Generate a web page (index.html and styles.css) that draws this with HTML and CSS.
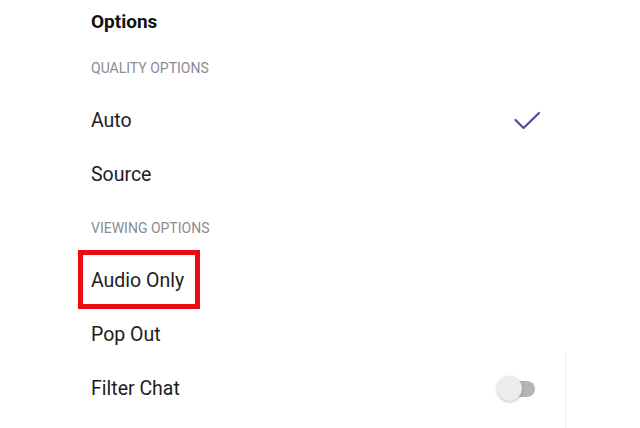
FILE: index.html
```html
<!DOCTYPE html>
<html lang="en">
<head>
  <meta charset="UTF-8" />
  <meta name="viewport" content="width=device-width, initial-scale=1.0"/>
  <title>Options</title>
  <link rel="stylesheet" href="styles.css">
</head>
<body>
  <div class="page">
    <div class="menu">
      <h1 class="title">Options</h1>

      <div class="section">Quality Options</div>
      <div class="row">
        <span>Auto</span>
        <svg class="check" width="26" height="20" viewBox="0 0 26 20">
          <polyline points="1.5,9 9.5,17 25,2" fill="none" stroke="#5d4594" stroke-width="2.2" stroke-linecap="round" stroke-linejoin="round"/>
        </svg>
      </div>
      <div class="row"><span>Source</span></div>

      <div class="section">Viewing Options</div>
      <div class="row"><span class="highlight">Audio Only</span></div>
      <div class="row"><span>Pop Out</span></div>
      <div class="row">
        <span>Filter Chat</span>
        <div class="toggle"><div class="thumb"></div></div>
      </div>
    </div>
    <div class="side"></div>
  </div>
</body>
</html>
```

FILE: styles.css
```css
body {
  margin: 0;
  background: #fff;
  font-family: Roboto, "Noto Sans", sans-serif;
  color: #1d1d20;
}
.page {
  display: flex;
  min-height: 428px;
}
.menu {
  width: 565px;
  box-sizing: border-box;
  padding: 1px 26px 0 91px;
}
.side {
  flex: 1;
  margin-top: 352px;
  border-left: 1px solid #ececec;
}
.title {
  margin: 0;
  height: 41px;
  line-height: 42px;
  font-size: 19px;
  font-weight: 700;
  color: #111;
}
.section {
  height: 52px;
  display: flex;
  align-items: center;
  font-size: 14px;
  text-transform: uppercase;
  color: #8b8b93;
}
.row {
  height: 54px;
  display: flex;
  align-items: center;
  justify-content: space-between;
  font-size: 19.5px;
  line-height: 22px;
}
.check {
  margin-right: -1px;
  margin-top: -1px;
}
.highlight {
  position: relative;
}
.highlight::after {
  content: "";
  position: absolute;
  left: -13px;
  right: -16px;
  top: -20px;
  bottom: -17px;
  border: 5px solid #ec0a13;
}
.toggle {
  position: relative;
  width: 35px;
  height: 16px;
  margin-right: 4px;
  border-radius: 8px;
  background: #b4b4b4;
}
.thumb {
  position: absolute;
  left: -3px;
  top: -5px;
  width: 25px;
  height: 25px;
  border-radius: 50%;
  background: #ececec;
  box-shadow: 0 1px 3px rgba(0,0,0,0.25);
}
```
